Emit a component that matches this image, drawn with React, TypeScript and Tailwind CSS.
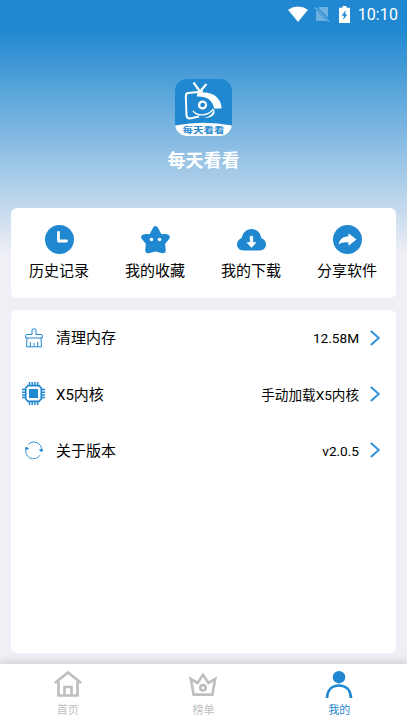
import type { ReactNode } from 'react';

const BLUE = '#1f88d0';

/* Status bar at the very top */
function StatusBar() {
  return (
    <div className="flex h-7 items-center justify-end pr-[9px] text-white">
      <svg className="mr-[6px] h-[17px] w-5" viewBox="0 0 20 17" fill="currentColor">
        <path d="M0 3.800Q10-2.600 20 3.800L10 16Z" />
      </svg>
      <svg className="mr-[9px] h-4 w-4 opacity-35" viewBox="0 0 16 16" fill="currentColor">
        <path d="M5.500 1H14v10.800L4.300 2.300ZM2 4.200 12.800 15H2Z" />
        <path d="M1 1.500 15 15.500" stroke="currentColor" strokeWidth="1.200" />
      </svg>
      <svg className="mr-[8px] h-[17px] w-[11px]" viewBox="0 0 11 17">
        <path d="M3.500 0h4v1.800H11V17H0V1.800h3.500Z" fill="white" />
        <path d="M6.800 4 2.600 9.800h2.300l-.7 4.200 4.200-5.800H6Z" fill={BLUE} />
      </svg>
      <span className="mt-px text-[16px] leading-none tracking-[0.1px]">10:10</span>
    </div>
  );
}

function Logo() {
  return (
    <svg className="h-[57px] w-[57px]" viewBox="0 0 57 57">
      <defs>
        <clipPath id="logo-shape">
          <rect width="57" height="57" rx="12" />
        </clipPath>
      </defs>
      <g clipPath="url(#logo-shape)">
        <rect width="57" height="57" fill={BLUE} />
        <path d="M0 46.500Q28.500 41 57 46.500V57H0Z" fill="white" />
        {/* TV antenna and body */}
        <path d="M18.500 3.500 25 12.500M31.500 5 25 12.500" stroke="white" strokeWidth="2.200" fill="none" />
        <path d="M28 12.500 13 14Q10.800 14.500 10.800 17L11.500 36.500Q12 39.500 15 39.500L24 37.500" stroke="white" strokeWidth="2" fill="none" />
        {/* Eye */}
        <path d="M22 14.500C35 10.500 47 18 46.500 29.500H39C38 21.500 32 17 22 17.500Z" fill="white" />
        <circle cx="27.500" cy="26" r="5.200" fill="none" stroke={BLUE} strokeWidth="1" />
        <circle cx="27.500" cy="26" r="3.400" fill={BLUE} stroke="white" strokeWidth="2.400" />
        <circle cx="28.500" cy="25.500" r="1.600" fill={BLUE} />
        <path d="M18 32C23 38 33 37 38.500 30" stroke="white" strokeWidth="1.300" fill="none" />
        <path d="M29 38.500C34 38 38 35 39 30C41.500 35.500 36 40 29 38.500Z" fill="white" />
        <text
          transform="translate(7.500 53.500) scale(1.330 1)"
          fontSize="7.900"
          fontWeight="700"
          fill={BLUE}
        >
          每天看看
        </text>
      </g>
    </svg>
  );
}

const ClockIcon = (
  <svg className="h-[29px] w-[29px]" viewBox="0 0 29 29">
    <circle cx="14.500" cy="14.500" r="14.500" fill={BLUE} />
    <path d="M13.500 7.500V16H21.500" stroke="white" strokeWidth="2.800" strokeLinecap="round" strokeLinejoin="round" fill="none" />
  </svg>
);

const StarIcon = (
  <svg className="h-[29px] w-[29px]" viewBox="0 0 29 29">
    <path
      d="M14.500 4 18 10.500 26 12.200 21.300 18 22 25.500 14.500 23.500 7 25.500 7.700 18 3 12.200 11 10.500Z"
      fill={BLUE}
      stroke={BLUE}
      strokeWidth="5.500"
      strokeLinejoin="round"
    />
    <circle cx="10.500" cy="14.500" r="1.800" fill="white" />
    <circle cx="18.500" cy="14.500" r="1.800" fill="white" />
  </svg>
);

const CloudIcon = (
  <svg className="h-[29px] w-[29px]" viewBox="0 0 29 29">
    <path d="M6.500 25.500C2.500 25.500 0 22.700 0 19.500C0 16.500 2 14 4.800 13C5.500 7.800 9.500 4 14.500 4S23.500 7.800 24.200 13C27 14 29 16.500 29 19.500C29 22.700 26.500 25.500 22.500 25.500Z" fill={BLUE} />
    <path d="M13.200 11.500Q14.500 10.500 15.800 11.500V17.500H19L14.500 22.500 10 17.500H13.200Z" fill="white" stroke="white" strokeWidth=".6" strokeLinejoin="round" />
  </svg>
);

const ShareIcon = (
  <svg className="h-[29px] w-[29px]" viewBox="0 0 29 29">
    <circle cx="14.500" cy="14.500" r="14.500" fill={BLUE} />
    <path d="M15.500 8.200 23.500 14.500 15.500 20.700V17.500C11 16.800 8.300 17.600 5.500 19.500C6.500 14.500 10 11.500 15.500 11.300Z" fill="white" />
  </svg>
);

const BrushIcon = (
  <svg className="h-5 w-[18px]" viewBox="0 0 18 20" fill="none" stroke={BLUE}>
    <path d="M7 6.500V2Q7 .8 9 .8T11 2V6.500H16Q17.300 6.500 17.300 7.500V10H.7V7.500Q.7 6.500 2 6.500Z" />
    <path d="M2 10 1.500 18.800H16.500L16 10M5.300 14V18.500M9 15V18.500M12.700 14V18.500" />
  </svg>
);

const ChipIcon = (
  <svg className="h-[23px] w-[23px]" viewBox="0 0 23 23" fill="none" stroke={BLUE}>
    <path d="M6 3.700H17L19.300 6V17L17 19.300H6L3.700 17V6Z" strokeWidth="1.700" />
    <path d="M7.500 0V3.500M10.200 0V3.500M12.900 0V3.500M15.600 0V3.500M7.500 19.500V23M10.200 19.500V23M12.900 19.500V23M15.600 19.500V23M0 7.500H3.500M0 10.200H3.500M0 12.900H3.500M0 15.600H3.500M19.500 7.500H23M19.500 10.200H23M19.500 12.900H23M19.500 15.600H23" strokeWidth="1.500" />
    <rect x="7.500" y="7.500" width="8" height="8" fill={BLUE} />
  </svg>
);

const RefreshIcon = (
  <svg className="h-[18px] w-[18px]" viewBox="0 0 18 18" fill="none" stroke={BLUE} strokeWidth=".9">
    <path d="M3.200 3.700A7.600 7.600 0 0 1 16.500 9.200M14.800 14.300A7.600 7.600 0 0 1 1.500 7" />
    <path d="M-.3 8 1.500 6 3.500 8Z" fill={BLUE} />
    <path d="m14.500 8.800 2 2 1.600-2Z" fill={BLUE} />
  </svg>
);

const actions = [
  { label: '历史记录', icon: ClockIcon },
  { label: '我的收藏', icon: StarIcon },
  { label: '我的下载', icon: CloudIcon },
  { label: '分享软件', icon: ShareIcon },
];

const settings = [
  { label: '清理内存', value: '12.58M', icon: BrushIcon },
  { label: 'X5内核', value: '手动加载X5内核', icon: ChipIcon },
  { label: '关于版本', value: 'v2.0.5', icon: RefreshIcon },
];

function SettingRow({ label, value, icon }: { label: string; value: string; icon: ReactNode }) {
  return (
    <div className="flex h-[56.3px] items-center pr-4 pl-[11px]">
      <span className="flex w-[23px] justify-center">{icon}</span>
      <span className="mt-[2px] ml-[11px] text-[15px]">{label}</span>
      <span className="mt-[2px] ml-auto text-[13.600px]">{value}</span>
      <svg className="ml-[11px] h-4 w-[10px]" viewBox="0 0 10 16" fill="none" stroke="#2b91dc" strokeWidth="1.800">
        <path d="M.8 1 8.800 8 .8 15" />
      </svg>
    </div>
  );
}

const tabs = [
  {
    label: '首页',
    color: 'text-[#bfbfbf]',
    icon: (
      <>
        <path d="M.8 13 14 2.500 27.200 13" />
        <path d="M4.500 11V25.500H23.500V11M10.500 25V17H17.500V25" />
      </>
    ),
  },
  {
    label: '榜单',
    color: 'text-[#bfbfbf]',
    icon: (
      <>
        <path d="M1.800 9 4.700 24.700H23.300L26.200 9 19.500 13 14 4.800 8.500 13Z" />
        <circle cx="14" cy="17.800" r="2.700" />
      </>
    ),
  },
  {
    label: '我的',
    color: 'text-[#1f88d0]',
    icon: (
      <>
        <circle cx="14" cy="7.200" r="6.200" fill="currentColor" stroke="none" />
        <path d="M2 28C2.500 20 7 15.500 14 15.500S25.500 20 26 28" />
      </>
    ),
  },
];

export default function App() {
  return (
    <div className="flex h-[723px] w-full flex-col overflow-hidden bg-[#efeff5] bg-[linear-gradient(180deg,#1f88d0_0px,#1f88d0_28px,#efeff5_255px)] font-[Roboto,'Noto_Sans_CJK_SC',sans-serif] text-black">
      <StatusBar />

      {/* Profile header */}
      <header className="flex h-[180px] flex-col items-center pt-[51px]">
        <Logo />
        <h1 className="mt-[11px] text-[18px] leading-7 font-bold text-white">每天看看</h1>
      </header>

      {/* Shortcuts */}
      <section className="mx-[11px] grid h-[90px] shrink-0 grid-cols-4 rounded-md bg-white pt-[17px] pr-px">
        {actions.map((action) => (
          <div key={action.label} className="flex flex-col items-center">
            {action.icon}
            <span className="mt-[6px] text-[15px] leading-[22px]">{action.label}</span>
          </div>
        ))}
      </section>

      {/* Settings list */}
      <main className="mx-[11px] mt-[11.500px] mb-[11px] flex-1 rounded-md bg-white">
        {settings.map((item) => (
          <SettingRow key={item.label} {...item} />
        ))}
      </main>

      {/* Bottom tabs */}
      <nav className="grid h-[59px] shrink-0 grid-cols-3 bg-white pt-[6px] shadow-[0_-3px_8px_rgba(0,0,0,0.13)]">
        {tabs.map((tab) => (
          <div key={tab.label} className={`flex flex-col items-center ${tab.color}`}>
            <svg className="h-7 w-7" viewBox="0 0 28 28" fill="none" stroke="currentColor" strokeWidth="2.700">
              {tab.icon}
            </svg>
            <span className="mt-[5px] text-[11px] leading-4">{tab.label}</span>
          </div>
        ))}
      </nav>
    </div>
  );
}
